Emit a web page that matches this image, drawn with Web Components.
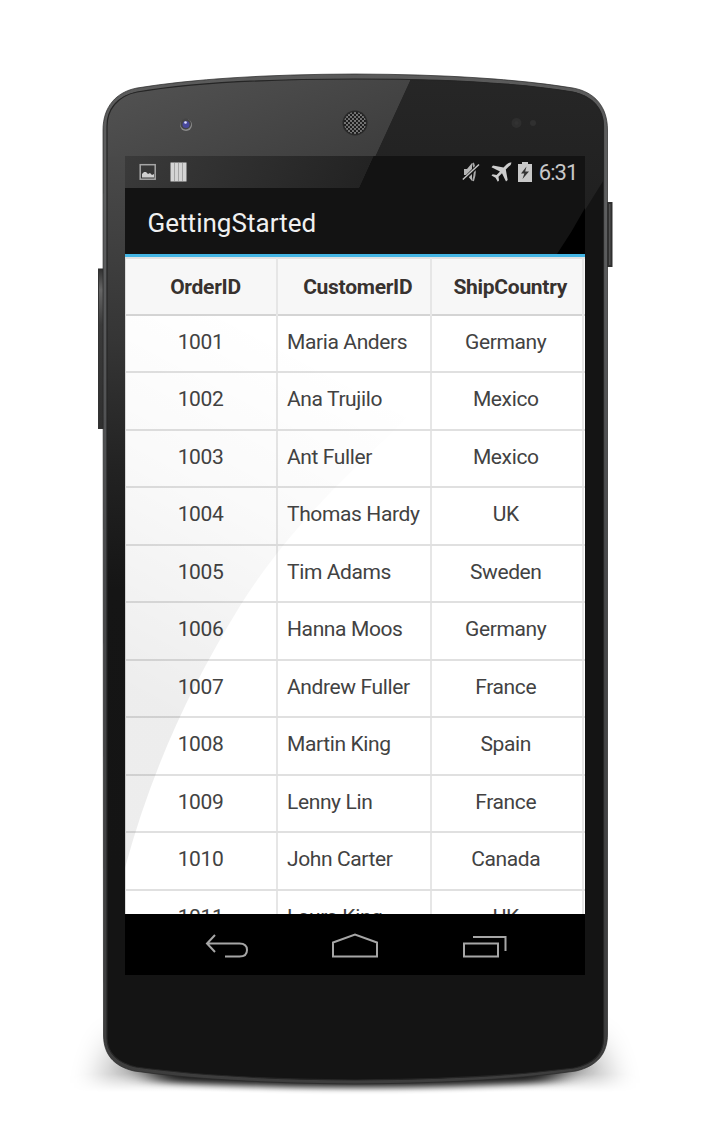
<!DOCTYPE html>
<html lang="en">
<head>
<meta charset="utf-8">
<title>GettingStarted</title>
<style>
html,body{margin:0;background:#fff}
body{width:710px;height:1125px;overflow:hidden;font-family:Roboto,sans-serif}
</style>
</head>
<body>
<phone-frame>
  <status-bar time="6:31"></status-bar>
  <action-bar>GettingStarted</action-bar>
  <data-grid></data-grid>
  <nav-bar></nav-bar>
</phone-frame>
<script>
const define = (name, html, init) => customElements.define(name, class extends HTMLElement {
  connectedCallback() {
    if (this.shadowRoot) return;
    this.attachShadow({ mode: 'open' }).innerHTML = html;
    if (init) init(this, this.shadowRoot);
  }
});

define('phone-frame', `
<style>
:host{display:grid;width:710px;height:1125px;position:relative;box-sizing:border-box;padding:156px 125px 150px 125px}
.art,.gloss{position:absolute;left:0;top:0;pointer-events:none}
.screen{position:relative;display:flex;flex-direction:column;width:460px;height:819px;background:#000;overflow:hidden}
</style>
<svg class="art" width="710" height="1125" viewBox="0 0 710 1125">
  <defs>
    <linearGradient id="g" x1="0" y1="0" x2="0" y2="1"><stop offset="0" stop-color="#505050"/><stop offset=".1" stop-color="#4a4a4a"/><stop offset=".34" stop-color="#353535"/><stop offset=".5" stop-color="#222"/><stop offset=".65" stop-color="#151515"/><stop offset="1" stop-color="#141414"/></linearGradient>
    <linearGradient id="lit" gradientUnits="userSpaceOnUse" x1="190" y1="70" x2="290" y2="310"><stop offset="0" stop-color="#505050"/><stop offset="1" stop-color="#303030"/></linearGradient>
    <linearGradient id="rg" x1="0" y1="0" x2="0" y2="1"><stop offset="0" stop-color="#272727"/><stop offset="1" stop-color="#202020"/></linearGradient>
    <linearGradient id="edge" x1="0" y1="0" x2="0" y2="1"><stop offset="0" stop-color="#5a5a5a"/><stop offset=".12" stop-color="#5e5f60"/><stop offset=".5" stop-color="#48494b"/><stop offset="1" stop-color="#3d3d3d"/></linearGradient>
    <linearGradient id="btn" x1="0" y1="0" x2="0" y2="1"><stop offset="0" stop-color="#303030"/><stop offset=".13" stop-color="#666"/><stop offset=".35" stop-color="#3a3a3a"/><stop offset="1" stop-color="#303030"/></linearGradient>
    <pattern id="mesh" width="4" height="4" patternUnits="userSpaceOnUse"><rect width="4" height="4" fill="#777"/><circle cx="1" cy="1" r="1.15" fill="#181818"/><circle cx="3" cy="3" r="1.15" fill="#181818"/></pattern>
    <filter id="b1" x="-20%" y="-60%" width="140%" height="220%"><feGaussianBlur stdDeviation="16 3"/></filter>
    <filter id="b2" filterUnits="userSpaceOnUse" x="0" y="900" width="710" height="225"><feGaussianBlur stdDeviation="15 16"/></filter>
    <linearGradient id="fade" gradientUnits="userSpaceOnUse" x1="0" y1="1074" x2="0" y2="1092"><stop offset="0" stop-color="#fff"/><stop offset="1" stop-color="#000"/></linearGradient>
    <mask id="sc" maskUnits="userSpaceOnUse" x="0" y="900" width="710" height="225"><rect y="900" width="710" height="192" fill="url(#fade)"/></mask>
    <clipPath id="glass"><path d="M107 126 C107 110 117 96 137 92 Q215 79 355 79 Q495 79 573 92 C593 96 603.500 110 603.500 126 V1038 C603.500 1055 593 1064 574 1068 Q490 1079 355 1080 Q220 1079 136 1067 C118 1063 107 1053 107 1038Z"/></clipPath>
  </defs>
  <g mask="url(#sc)"><path d="M112 1042 H598 L616 1096 H94Z" fill="#000" opacity=".25" filter="url(#b2)"/></g>
  <path d="M140 1064 H572 L552 1082 Q355 1093 158 1082Z" fill="#000" opacity=".85" filter="url(#b1)"/>
  <rect x="98.500" y="269" width="7" height="159.500" fill="url(#btn)" stroke="#333" stroke-width="1"/>
  <rect x="606" y="202" width="6.500" height="65" fill="#303030"/><rect x="609" y="204" width="1.500" height="61" fill="#515151"/>
  <path d="M103 130 C103 107 116 92 137 88 Q220 74.500 355 74 Q490 74.500 573 88 C595 92 607.500 107 607.500 130 V1034 C607.500 1054 597 1066 576 1071 Q490 1083 355 1084 Q220 1083 134 1071 C113 1066 104 1054 103.500 1036Z" fill="url(#edge)" stroke="#262626" stroke-width=".7"/>
  <path d="M107 126 C107 110 117 96 137 92 Q215 79 355 79 Q495 79 573 92 C593 96 603.500 110 603.500 126 V1038 C603.500 1055 593 1064 574 1068 Q490 1079 355 1080 Q220 1079 136 1067 C118 1063 107 1053 107 1038Z" fill="#141414"/>
  <g clip-path="url(#glass)">
    <path d="M103 70 H415 L411 79 L361 188 V500 H125 V870 H103Z" fill="url(#g)"/>
    <path d="M103 70 H415 L411 79 L375 157 H103Z" fill="url(#lit)"/>
    <path d="M415 70 H610 V170 L585 210 V157 H375Z" fill="url(#rg)"/>
  </g>
  <path d="M107 126 C107 110 117 96 137 92 Q215 79 355 79 Q495 79 573 92 C593 96 603.500 110 603.500 126 V1038 C603.500 1055 593 1064 574 1068 Q490 1079 355 1080 Q220 1079 136 1067 C118 1063 107 1053 107 1038Z" fill="none" stroke="#252525" stroke-width="1.200"/>
  <circle cx="186" cy="125" r="6" fill="#8b8b8b"/><circle cx="185.700" cy="124" r="5.400" fill="#444"/><circle cx="186" cy="124.500" r="3.500" fill="#47479b"/><circle cx="185.500" cy="122.500" r="1.300" fill="#dedeff"/>
  <circle cx="355" cy="123" r="12.500" fill="#292929"/><circle cx="355" cy="123" r="11" fill="url(#mesh)"/>
  <circle cx="516.500" cy="123" r="5" fill="#2e2e2e"/><circle cx="516.500" cy="123" r="2" fill="#323232"/><circle cx="533" cy="123" r="3" fill="#303030"/>
</svg>
<div class="screen"><slot></slot></div>
<svg class="gloss" width="710" height="1125" viewBox="0 0 710 1125">
  <defs><linearGradient id="shade" gradientUnits="userSpaceOnUse" x1="330" y1="360" x2="150" y2="700"><stop offset="0" stop-color="#000" stop-opacity="0"/><stop offset=".45" stop-color="#000" stop-opacity=".022"/><stop offset="1" stop-color="#000" stop-opacity=".07"/></linearGradient></defs>
  <path d="M125 315 H502 Q455 375 400 425 C330 491 285 535 240 606 C188 690 150 775 125 868Z" fill="url(#shade)"/>
  <path d="M585 208 V254 H557 Q572 232 585 208Z" fill="#000"/>
</svg>`);

define('status-bar', `
<style>
:host{display:flex;height:32px;align-items:center;box-sizing:border-box;padding:0 7.500px 0 14px;color:#c8c8c8;background:linear-gradient(114.5deg,#3a3a3a 0,#232323 226px,transparent 226.500px),#131313}
svg{display:block;flex:none}
.l{display:flex;gap:14px;flex:1}.r{display:flex;align-items:center}
.t{font-size:22px;line-height:32px;margin-left:7px;letter-spacing:-.9px;position:relative;top:1px}
</style>
<div class="l">
<svg width="17" height="20"><rect x="1.200" y="2.700" width="15" height="14.500" fill="none" stroke="#a5a5a5" stroke-width="1.500"/><path d="M3 15.500V12l2-2h2l2 2 2-1 2 2 2-1v3.500z" fill="#d0d0d0"/></svg>
<svg width="17" height="20"><rect x=".5" y=".5" width="16" height="19" fill="#d4d4d4"/><path d="M4.500 1v18M8.500 1v18M12.500 1v18" stroke="#a4a4a4"/></svg>
</div>
<div class="r">
<svg width="18" height="22"><path d="M2 8h3l5-6v18l-5-6H2z" fill="#b5b5b5"/><path d="M11 2Q14.500 10.500 11 20" stroke="#a9a9a9" stroke-width="2" fill="none"/><path d="M.5 20 17.500 3" stroke="#131313" stroke-width="3.500"/><path d="M.8 18.500 17 3.500" stroke="#c4c4c4" stroke-width="1.500"/></svg>
<svg width="21" height="22" style="margin-left:11px"><path d="M20.500 1.500Q18 1 15.500 3.500L12.500 6.500 2 4.500.5 6.200 9 10.500 5.500 14 1.700 13.300.5 14.600 4.500 16.800 6.800 20.800 8 19.600 7.500 15.800 11 12.300 15 20.500 16.700 19 14.800 8.500 17.800 5.500Q20.500 3.500 20.500 1.500Z" fill="#cdcdcd"/></svg>
<svg width="14" height="22" style="margin-left:6px"><path d="M4 1h6v2h4v18H0V3h4z" fill="#c8c8c8"/><path d="M8.500 5.500 3 12.500h3.300L4.500 18 11 10.500H7.200z" fill="#333"/></svg>
<span class="t"></span></div>`, (h, r) => r.querySelector('.t').textContent = h.getAttribute('time'));

define('action-bar', `
<style>:host{display:block;height:69px;box-sizing:border-box;padding-left:22.500px;background:#131313;border-bottom:3px solid #43b5e4;color:#f0f0f0;font-size:26px;line-height:71px;letter-spacing:.03px}</style><slot></slot>`);

define('data-grid', `
<style>
:host{display:block;height:657px;overflow:hidden;background:#fff;color:#424242;border-left:1px solid #dcdcdc;box-sizing:border-box}
.row{display:grid;grid-template-columns:152px 153.500px 1fr;height:57.560px;box-sizing:border-box;border-bottom:2px solid #e0e0e0;font-size:21px;line-height:52px}
.row.h{height:58.500px;padding-top:1px;background:linear-gradient(#e2e2e2 0 2px,#f7f7f7 2px);font-weight:700;line-height:59px;color:#38322f;border-bottom-color:#d4d4d4}
span{border-right:2px solid #e6e6e6;height:100%;box-sizing:border-box;text-align:center;white-space:nowrap;letter-spacing:-.38px;padding-right:1px}
span:nth-child(2){text-align:left;padding-left:9px}
.h span{letter-spacing:-.28px}
.h span:nth-child(2){text-align:center;padding-left:9px}
span:nth-child(3){margin-right:1px;padding-right:2px}
.h span:nth-child(3){padding-left:9px}
.h span:first-child{padding-left:10px}
</style><div class="b"></div>`, (h, r) => {
  const rows = [['OrderID','CustomerID','ShipCountry'],['1001','Maria Anders','Germany'],['1002','Ana Trujilo','Mexico'],['1003','Ant Fuller','Mexico'],['1004','Thomas Hardy','UK'],['1005','Tim Adams','Sweden'],['1006','Hanna Moos','Germany'],['1007','Andrew Fuller','France'],['1008','Martin King','Spain'],['1009','Lenny Lin','France'],['1010','John Carter','Canada'],['1011','Laura King','UK']];
  r.querySelector('.b').innerHTML = rows.map((c, i) => `<div class="row${i ? '' : ' h'}">${c.map(t => `<span>${t}</span>`).join('')}</div>`).join('');
});

define('nav-bar', `
<style>:host{display:flex;height:61px;align-items:center;padding:0 78px 0 80px;justify-content:space-between;background:#000}svg{display:block;fill:none;stroke:#a6a6a6;stroke-width:2}svg:nth-of-type(2){margin-right:2px}</style>
<svg width="44" height="28"><path d="M10 4 2 12.500 10 21M2 12.500H34.500Q42 12.500 42 19T34.500 25.500H20"/></svg>
<svg width="48" height="28"><path d="M2 25.500V11.500L24 3.500 46 11.500V25.500Z"/></svg>
<svg width="45" height="28"><path d="M2 12.500H36V25.500H2ZM11 6H43.500V20"/></svg>`);
</script>
</body>
</html>
